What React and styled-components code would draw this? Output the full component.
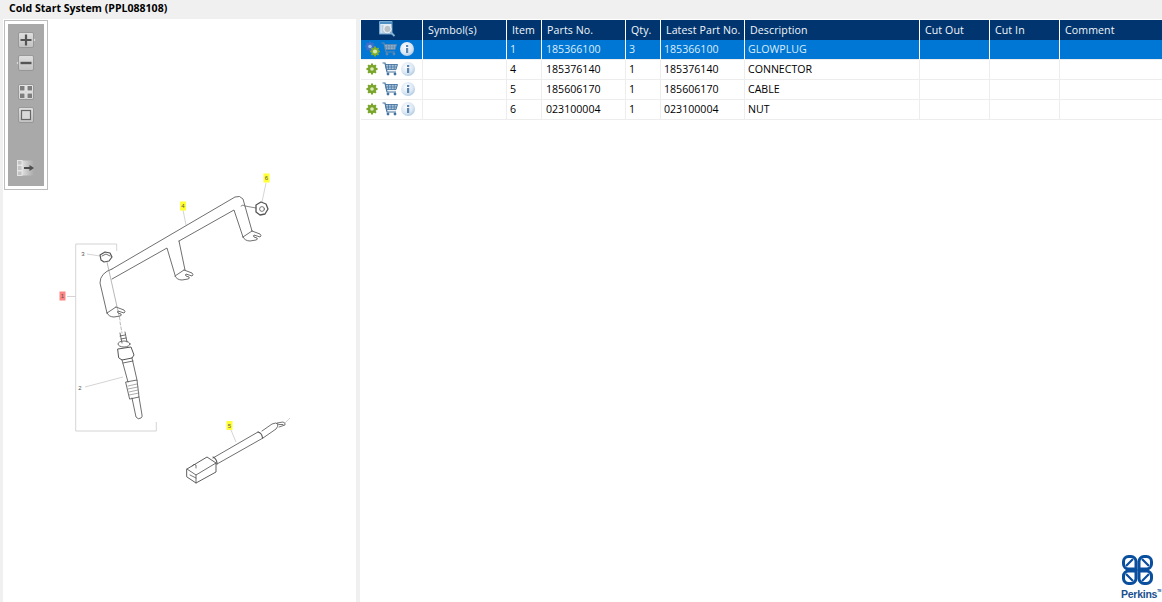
import React, { useId } from "react";
import styled, { createGlobalStyle } from "styled-components";

const Global = createGlobalStyle`
  html, body { margin: 0; padding: 0; height: 100%; background: #f0f0f0; overflow: hidden; }
  #root { height: 100%; }
`;

const Page = styled.div`
  width: 1162px; height: 602px; display: flex; flex-direction: column;
  background: #f0f0f0; font-family: "Open Sans", "Noto Sans", sans-serif; color: #000;
`;
const TitleBar = styled.div`
  height: 19px; flex: none; padding-left: 9px; font-size: 10.55px; font-weight: 700; line-height: 17px; color: #000;
`;
const Body = styled.div`
  flex: 1; display: flex; min-height: 0; padding-left: 3px; gap: 4px;
`;
const Canvas = styled.div`
  position: relative; width: 353px; background: #fff; flex: none;
`;
const DiagramSvg = styled.svg`
  display: block; width: 353px; height: 583px;
`;
const Toolbar = styled.div`
  position: absolute; left: 1px; top: 1px; width: 36px; height: 162px;
  border: 1px solid #bdbdbd; padding: 3px; background: #fff; box-sizing: content-box;
`;
const ToolbarInner = styled.div`
  width: 36px; height: 162px; background: #a9a9a9; display: flex; flex-direction: column; align-items: center; padding-top: 8px; box-sizing: border-box;
`;
const ToolButton = styled.div`
  width: 16px; height: 16px; margin-top: ${p => p.$gap || 0}px; flex: none; display: flex; justify-content: center;
  svg { display: block; flex: none; }
`;
const RightPanel = styled.div`
  position: relative; flex: 1; background: #fff; padding: 1px 0 0 1px; min-width: 0;
`;
const Table = styled.table`
  border-collapse: separate; border-spacing: 0; table-layout: fixed; width: 801px; font-size: 10.6px;
`;
const Head = styled.th`
  width: ${p => p.$w}px; height: 20px; box-sizing: border-box; padding: 0 0 1px 5px; background: #00356f; color: #f2f6fa;
  font-weight: 400; text-align: left; border-right: 1px solid #fff; white-space: nowrap; letter-spacing: 0.1px;
  &:last-child { border-right: none; }
`;
const Row = styled.tr`
  height: 20px;
  td { background: ${p => p.$sel ? "#0077d5" : "#fff"}; color: ${p => p.$sel ? "#dcecf9" : "#000"};
       border-right: 1px solid ${p => p.$sel ? "#fff" : "#ededed"}; border-bottom: 1px solid #ededed; }
  td:last-child { border-right: none; }
`;
const Cell = styled.td`
  box-sizing: border-box; padding: 0 0 1px ${p => p.$pad || 3}px; white-space: nowrap; height: 20px;
`;
const IconRow = styled.div`
  display: flex; align-items: center; padding-left: 2px; height: 17px;
  svg { display: block; flex: none; }
`;
const HeadIcon = styled.div`
  display: flex; justify-content: center; padding-right: 13px;
`;
const Brand = styled.div`
  position: absolute; right: 1px; bottom: 1px; width: 42px; display: flex; flex-direction: column; align-items: flex-end;
`;
const BrandName = styled.span`
  font-family: "Liberation Sans", Arial, sans-serif; font-size: 10.5px; font-weight: 700; color: #1a4f8f; line-height: 13px; letter-spacing: -0.25px; white-space: nowrap;
`;
const BrandTm = styled.span`
  font-size: 3px; vertical-align: top; line-height: 6px;
`;

function gearPath(cx, cy, r) {
  const pts = [];
  const n = 8;
  for (let i = 0; i < n; i++) {
    const a = (i / n) * Math.PI * 2;
    const s = Math.PI / n;
    const p = (rr, ang) => `${(cx + rr * Math.cos(ang)).toFixed(2)} ${(cy + rr * Math.sin(ang)).toFixed(2)}`;
    pts.push(`L${p(r * 0.76, a - s * 0.7)}`, `L${p(r, a - s * 0.42)}`, `L${p(r, a + s * 0.42)}`, `L${p(r * 0.76, a + s * 0.7)}`);
  }
  return "M" + pts.join(" ").slice(1) + "Z";
}

const GearIcon = () => (
  <svg width="12" height="12" viewBox="0 0 12 12" style={{ marginRight: 4 }}>
    <path d={gearPath(6, 6, 5.6)} fill="#79a52a" />
    <circle cx="6" cy="6" r="1.8" fill="#dfeabf" />
  </svg>
);
const GearsSelected = () => (
  <svg width="15" height="16" viewBox="0 0 15 16" style={{ marginRight: 1, marginLeft: -1 }}>
    <path d={gearPath(5, 5.5, 5)} fill="#3f6fc8" />
    <circle cx="5" cy="5.500" r="1.8" fill="#9cc0ee" />
    <path d={gearPath(10, 10.5, 5)} fill="#7fae2c" />
    <circle cx="10" cy="10.500" r="2.1" fill="#d7e8b0" />
  </svg>
);
const CartIcon = ({ sel }) => {
  const c = sel ? "#5e87ad" : "#44739f";
  return (
    <svg width="16" height="14" viewBox="0 0 16 14" fill="none" style={{ marginRight: 3 }}>
      <path d="M0.5 1H3L5 10H14" stroke={c} strokeWidth="1.2" />
      <path d="M3.4 2.500H15.500L14 7.600H4.500Z" fill={sel ? "#8fb0cd" : "#a9c3da"} stroke={c} strokeWidth="0.9" />
      <path d="M6.500 2.500V7.500M9.300 2.500V7.500M12.200 2.500V7.500M3.800 5H15" stroke={c} strokeWidth="0.7" />
      <circle cx="6" cy="12" r="1.4" fill={c} />
      <circle cx="13" cy="12" r="1.4" fill={c} />
    </svg>
  );
};
const InfoIcon = () => {
  const id = useId();
  return (
    <svg width="14" height="14" viewBox="0 0 14 14">
      <defs>
        <radialGradient id={id} cx="0.4" cy="0.35" r="0.75">
          <stop offset="0" stopColor="#fafcfe" />
          <stop offset="0.6" stopColor="#dbe7f3" />
          <stop offset="1" stopColor="#a3c1dd" />
        </radialGradient>
      </defs>
      <circle cx="7" cy="7" r="7" fill={`url(#${id})`} />
      <rect x="6" y="6" width="2.200" height="5" fill="#5c87b0" />
      <rect x="6" y="3" width="2.200" height="2" fill="#5c87b0" />
    </svg>
  );
};
const SearchDocIcon = () => (
  <svg width="17" height="17" viewBox="0 0 17 17" fill="none">
    <rect x="0.8" y="0.8" width="12" height="12" fill="#e4edf5" stroke="#8dbbdf" strokeWidth="1.2" />
    <rect x="1" y="1" width="12" height="2" fill="#4f90c4" />
    <path d="M2.500 5H4.500M2.500 7H4.500M2.500 9H4.500M2.500 11H6" stroke="#6d9cc2" strokeWidth="0.7" />
    <circle cx="8.500" cy="8" r="3.700" fill="#b9c1c8" stroke="#f0f3f5" strokeWidth="1" />
    <path d="M11.300 10.800L15.500 15" stroke="#86b2d4" strokeWidth="1.9" />
  </svg>
);

const ButtonFace = ({ children, arrow }) => (
  <svg width="20" height="16" viewBox="-2 0 20 16" style={{ overflow: "visible" }}>
    <defs>
      <linearGradient id="btnFace" x1="0" y1="0" x2="0" y2="1">
        <stop offset="0" stopColor="#e0e0e0" />
        <stop offset="1" stopColor="#c2c2c2" />
      </linearGradient>
    </defs>
    {arrow === "right" && <path d="M15 6L17.500 8L15 10Z" fill="#e8e8e8" />}
    {arrow === "left" && <path d="M1 6L-1.500 8L1 10Z" fill="#e8e8e8" />}
    <rect x="0.500" y="0.500" width="15" height="15" rx="1.500" fill="url(#btnFace)" stroke="#8e8e8e" strokeWidth="0.8" />
    {children}
  </svg>
);

const ExportIcon = () => (
  <svg width="18" height="16" viewBox="0 0 18 16">
    <defs>
      <linearGradient id="expFade" x1="0" y1="0" x2="1" y2="0">
        <stop offset="0" stopColor="#dedede" />
        <stop offset="1" stopColor="#a9a9a9" />
      </linearGradient>
    </defs>
    <rect x="5" y="0.500" width="12" height="15" fill="url(#expFade)" />
    <rect x="0.500" y="0.500" width="4.500" height="4.500" fill="#c4c4c4" stroke="#eee" strokeWidth="0.8" />
    <rect x="0.500" y="5.500" width="4.500" height="5" fill="#c4c4c4" stroke="#eee" strokeWidth="0.8" />
    <rect x="0.500" y="11" width="4.500" height="4.500" fill="#c4c4c4" stroke="#eee" strokeWidth="0.8" />
    <path d="M7 8H13" stroke="#4d4d4d" strokeWidth="2" />
    <path d="M12.500 5L17 8L12.500 11Z" fill="#4d4d4d" />
  </svg>
);

const Toolbox = () => (
  <Toolbar>
    <ToolbarInner>
      <ToolButton>
        <ButtonFace arrow="right"><path d="M2.500 8H13.500M8 2.500V13.500" stroke="#555" strokeWidth="2.200" /></ButtonFace>
      </ToolButton>
      <ToolButton $gap={7}>
        <ButtonFace arrow="left"><path d="M2.500 8H13.500" stroke="#555" strokeWidth="2.400" /></ButtonFace>
      </ToolButton>
      <ToolButton $gap={13}>
        <ButtonFace>
          <path d="M1.500 1.500H7.500V7.500H1.500ZM8.500 1.500H14.500V7.500H8.500ZM1.500 8.500H7.500V14.500H1.500ZM8.500 8.500H14.500V14.500H8.500Z" fill="#ececec" />
          <path d="M2 2H6.500V6.500H2ZM9.500 2H14V6.500H9.500ZM2 9.500H6.500V14H2ZM9.500 9.500H14V14H9.500Z" fill="#7d7d7d" />
        </ButtonFace>
      </ToolButton>
      <ToolButton $gap={7}>
        <ButtonFace><rect x="3.500" y="3.500" width="9" height="9" fill="#d8d8d8" stroke="#666" strokeWidth="1.200" /></ButtonFace>
      </ToolButton>
      <ToolButton $gap={37}>
        <ExportIcon />
      </ToolButton>
    </ToolbarInner>
  </Toolbar>
);

const Tag = ({ x, y, label, bg }) => (
  <g>
    <rect x={x - 3} y={y - 4.5} width="6" height="9" fill={bg} />
    <text x={x} y={y + 2} fontSize="6" textAnchor="middle" fill="#555" fontFamily="Liberation Sans, sans-serif">{label}</text>
  </g>
);

const foot = (x, y) => {
  const p = (dx, dy) => `${x + dx} ${y + dy}`;
  return `M${p(0, 0)}L${p(8, 3)}Q${p(10, 5)} ${p(8, 6)}L${p(2, 4)}Q${p(1, 5)} ${p(2, 6)}L${p(5, 7)}Q${p(6, 8.5)} ${p(4, 9)}L${p(-2, 10)}Q${p(-7, 10)} ${p(-9, 6)}M${p(-9, 6)}L${p(0, 0)}`;
};

const Diagram = () => (
  <DiagramSvg viewBox="3 19 353 583">
    <g fill="none" stroke="#c9c9c9" strokeWidth="0.8">
      <path d="M116.700 251V244H75.700V431H156.300V422" />
      <path d="M67 296.500H75.700" />
      <path d="M87 254L100 256" />
      <path d="M85 387L123 377" />
      <path d="M183 210L186 225" />
      <path d="M266 183L262 202" />
      <path d="M231 430L236 442" />
      <path d="M285 423L290 418" />
    </g>
    <g fill="none" stroke="#555" strokeWidth="0.85" strokeLinejoin="round" strokeLinecap="round">
      {/* bracket */}
      <path d="M112 269L235 197Q240 195 243 199L252 231" />
      <path d="M112 279L167 248L175 275M179 241L185 270" />
      <path d="M179 241L234 210L243 237" />
      <path d="M112 269Q100 273 100 283L107 313" />
      <path d={foot(252, 231)} />
      <path d={foot(184, 270)} />
      <path d={foot(116, 307)} />
      {/* nut 6 */}
      <path d="M256 205L261 202L266 204L268 209L265 214L260 215L256 212Z" strokeWidth="1.300" />
      <circle cx="262" cy="209" r="2.400" strokeWidth="0.8" />
      <path d="M241 206Q243 204 245 206L256 208" strokeWidth="0.7" />
      {/* nut 3 */}
      <path d="M100 255L105 252L110 253L112 257L109 261L104 262L101 260Z" strokeWidth="1.200" />
      <path d="M102 256L106 254L110 256" />
      <path d="M107 262L120 320" stroke="#888" strokeWidth="0.6" />
      <path d="M120 322L122 333" stroke="#888" strokeWidth="0.6" strokeDasharray="3 2" />
      {/* glow plug */}
      <path d="M120 333L122 343M125 332L127 342M120 336L125 335M121 339L126 338" />
      <ellipse cx="124" cy="344" rx="6" ry="3" />
      <path d="M118 349L131 347L134 355L132 358L122 360L119 358Z" strokeWidth="1" />
      <path d="M122 360L128 382M132 358L137 380M123 363L133 361" />
      <path d="M126 382L137 380L139 397L130 399Z" />
      <path d="M128 386L137 384M128 389L138 387M129 392L138 390M129 395L139 393" stroke="#888" strokeWidth="0.7" />
      <path d="M132 398L136 417Q138 420 141 418Q142.500 417 142 415L139 397" />
      {/* cable */}
      <path d="M187 469L207 457L216 463V472L196 483L187 477Z" strokeWidth="0.950" />
      <path d="M187 469L196 475L216 463M196 475V483" />
      <path d="M190 475L196 478M192 466Q194 463 196 465V468" strokeWidth="0.8" />
      <path d="M213 458L258 432M217 464L263 438" />
      <path d="M213 457Q217 459 217 464M258 432Q262 433 262.500 438" strokeWidth="1.100" />
      <path d="M262 431L272 424Q276 422 278 424M263 438L276 429Q278 427 278 424" />
      <path d="M277 423L283 422Q286 423 285 425L279 427M279 424.500H283" strokeWidth="0.8" />
    </g>
    <Tag x={266.500} y={178} label="6" bg="#ffff33" />
    <Tag x={183} y={206} label="4" bg="#ffff33" />
    <Tag x={229.500} y={425.500} label="5" bg="#ffff33" />
    <Tag x={62.500} y={296} label="1" bg="#ff8585" />
    <text x="83" y="256" fontSize="6" textAnchor="middle" fill="#555" fontFamily="Liberation Sans, sans-serif">3</text>
    <text x="80" y="390" fontSize="6" textAnchor="middle" fill="#555" fontFamily="Liberation Sans, sans-serif">2</text>
  </DiagramSvg>
);

const LogoMark = () => (
  <svg width="31" height="30" viewBox="0 0 31 30" fill="none" stroke="#0a4f9e" strokeWidth="3" style={{ display: "block", marginRight: 8, marginBottom: 3 }}>
    <path d="M14 14H6.500A5 5 0 0 1 1.500 9V6.500A5 5 0 0 1 6.500 1.500H9A5 5 0 0 1 14 6.500Z" />
    <path d="M17 14H24.500A5 5 0 0 0 29.500 9V6.500A5 5 0 0 0 24.500 1.500H22A5 5 0 0 0 17 6.500Z" />
    <path d="M14 16H6.500A5 5 0 0 0 1.500 21V23.500A5 5 0 0 0 6.500 28.500H9A5 5 0 0 0 14 23.500Z" />
    <path d="M17 16H24.500A5 5 0 0 1 29.500 21V23.500A5 5 0 0 1 24.500 28.500H22A5 5 0 0 1 17 23.500Z" />
    <path d="M4 11L11 4M27 11L20 4M4 19L11 26M27 19L20 26" strokeWidth="2.200" />
  </svg>
);

const columns = [
  { key: "tools", w: 62 },
  { key: "Symbol(s)", w: 84 },
  { key: "Item", w: 35 },
  { key: "Parts No.", w: 84 },
  { key: "Qty.", w: 35 },
  { key: "Latest Part No.", w: 84 },
  { key: "Description", w: 175 },
  { key: "Cut Out", w: 70 },
  { key: "Cut In", w: 70 },
  { key: "Comment", w: 102 },
];

const rows = [
  { item: "1", part: "185366100", qty: "3", latest: "185366100", desc: "GLOWPLUG", sel: true },
  { item: "4", part: "185376140", qty: "1", latest: "185376140", desc: "CONNECTOR" },
  { item: "5", part: "185606170", qty: "1", latest: "185606170", desc: "CABLE" },
  { item: "6", part: "023100004", qty: "1", latest: "023100004", desc: "NUT" },
];

export default function App() {
  return (
    <Page>
      <Global />
      <TitleBar>Cold Start System (PPL088108)</TitleBar>
      <Body>
        <Canvas>
          <Diagram />
          <Toolbox />
        </Canvas>
        <RightPanel>
          <Table>
            <thead>
              <tr>
                {columns.map(c => (
                  <Head key={c.key} $w={c.w}>
                    {c.key === "tools" ? <HeadIcon><SearchDocIcon /></HeadIcon> : c.key}
                  </Head>
                ))}
              </tr>
            </thead>
            <tbody>
              {rows.map(r => (
                <Row key={r.item} $sel={r.sel}>
                  <Cell>
                    <IconRow>
                      {r.sel ? <GearsSelected /> : <GearIcon />}
                      <CartIcon sel={r.sel} />
                      <InfoIcon />
                    </IconRow>
                  </Cell>
                  <Cell />
                  <Cell>{r.item}</Cell>
                  <Cell $pad={4}>{r.part}</Cell>
                  <Cell>{r.qty}</Cell>
                  <Cell>{r.latest}</Cell>
                  <Cell>{r.desc}</Cell>
                  <Cell />
                  <Cell />
                  <Cell />
                </Row>
              ))}
            </tbody>
          </Table>
          <Brand>
            <LogoMark />
            <BrandName>Perkins<BrandTm>TM</BrandTm></BrandName>
          </Brand>
        </RightPanel>
      </Body>
    </Page>
  );
}
